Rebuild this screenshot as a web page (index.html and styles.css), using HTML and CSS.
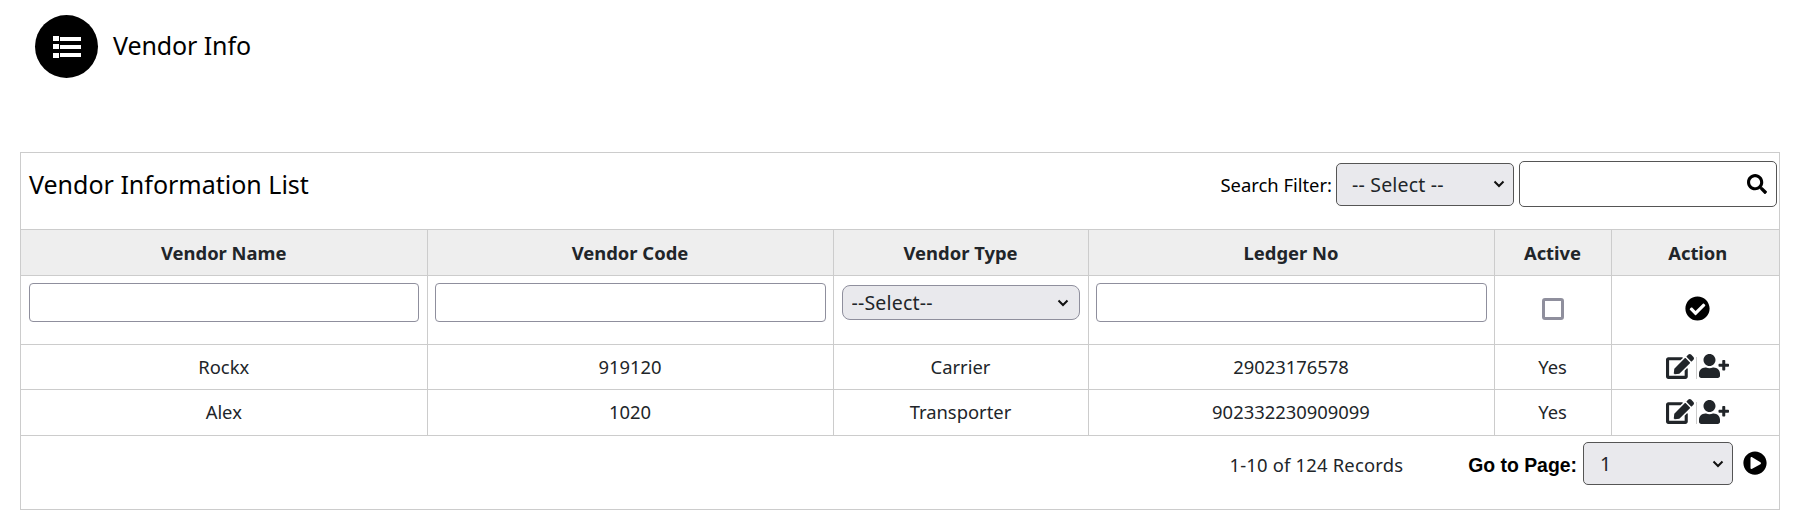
FILE: index.html
```html
<!DOCTYPE html>
<html lang="en">
<head>
<meta charset="utf-8">
<title>Vendor Info</title>
<link rel="stylesheet" href="styles.css">
</head>
<body>
<header class="page-head">
  <span class="head-badge">
    <svg class="icon-list" viewBox="0 0 28 22"><rect x="0" y="0" width="6" height="5"/><rect x="7" y="1" width="21" height="4"/><rect x="0" y="8" width="6" height="5"/><rect x="7" y="9" width="21" height="4"/><rect x="0" y="17" width="6" height="5"/><rect x="7" y="17" width="21" height="4"/></svg>
  </span>
  <h1 class="page-title">Vendor Info</h1>
</header>

<section class="card">
  <div class="card-head">
    <h2 class="card-title">Vendor Information List</h2>
    <div class="search">
      <label class="search-label">Search Filter:</label>
      <select class="search-select"><option>-- Select --</option></select>
      <div class="search-box">
        <input class="search-input" type="text">
        <svg class="icon-search" viewBox="0 0 512 512"><path d="M505 442.7L405.3 343c-4.5-4.5-10.6-7-17-7H372c27.6-35.3 44-79.7 44-128C416 93.1 322.9 0 208 0S0 93.1 0 208s93.1 208 208 208c48.3 0 92.7-16.4 128-44v16.3c0 6.4 2.5 12.5 7 17l99.7 99.7c9.4 9.4 24.6 9.4 33.9 0l28.3-28.3c9.4-9.4 9.4-24.6.1-34zM208 336c-70.7 0-128-57.2-128-128 0-70.7 57.2-128 128-128 70.7 0 128 57.2 128 128 0 70.7-57.2 128-128 128z"/></svg>
      </div>
    </div>
  </div>

  <table class="grid">
    <colgroup>
      <col class="c-name"><col class="c-code"><col class="c-type"><col class="c-ledger"><col class="c-active"><col class="c-action">
    </colgroup>
    <thead>
      <tr><th>Vendor Name</th><th>Vendor Code</th><th>Vendor Type</th><th>Ledger No</th><th>Active</th><th>Action</th></tr>
    </thead>
    <tbody>
      <tr class="filter-row">
        <td class="field-cell field-first"><input class="cell-input" type="text"></td>
        <td class="field-cell"><input class="cell-input" type="text"></td>
        <td class="field-cell field-select"><select class="cell-select"><option>--Select--</option></select></td>
        <td class="field-cell"><input class="cell-input" type="text"></td>
        <td><span class="checkbox"></span></td>
        <td>
          <svg class="icon-check" viewBox="0 0 512 512"><path d="M504 256c0 136.967-111.033 248-248 248S8 392.967 8 256 119.033 8 256 8s248 111.033 248 248zM227.314 387.314l184-184c6.248-6.248 6.248-16.379 0-22.627l-22.627-22.627c-6.248-6.249-16.379-6.249-22.628 0L216 308.118l-70.059-70.059c-6.248-6.248-16.379-6.248-22.628 0l-22.627 22.627c-6.248 6.248-6.248 16.379 0 22.627l104 104c6.249 6.249 16.379 6.249 22.628.001z"/></svg>
        </td>
      </tr>
      <tr class="data-row">
        <td>Rockx</td><td>919120</td><td>Carrier</td><td>29023176578</td><td>Yes</td>
        <td>
          <div class="actions">
            <svg class="icon-edit" viewBox="0 0 576 512"><path d="M402.6 83.2l90.2 90.2c3.8 3.8 3.8 10 0 13.8L274.4 405.6l-92.8 10.3c-12.4 1.4-22.9-9.1-21.5-21.5l10.3-92.8L388.8 83.2c3.8-3.8 10-3.8 13.8 0zm162-22.9l-48.8-48.8c-15.2-15.2-39.9-15.2-55.2 0l-35.4 35.4c-3.8 3.8-3.8 10 0 13.8l90.2 90.2c3.8 3.8 10 3.8 13.8 0l35.4-35.4c15.2-15.3 15.2-40 0-55.2zM384 346.2V448H64V128h229.8c3.2 0 6.2-1.3 8.5-3.5l40-40c7.6-7.6 2.2-20.5-8.5-20.5H48C21.5 64 0 85.5 0 112v352c0 26.5 21.5 48 48 48h352c26.5 0 48-21.5 48-48V306.2c0-10.7-12.9-16-20.5-8.5l-40 40c-2.2 2.3-3.5 5.3-3.5 8.5z"/></svg>
            <span class="sep"></span>
            <svg class="icon-user" viewBox="0 0 640 512"><path d="M624 208h-64v-64c0-8.8-7.2-16-16-16h-32c-8.8 0-16 7.2-16 16v64h-64c-8.8 0-16 7.2-16 16v32c0 8.8 7.2 16 16 16h64v64c0 8.8 7.2 16 16 16h32c8.8 0 16-7.2 16-16v-64h64c8.8 0 16-7.2 16-16v-32c0-8.8-7.2-16-16-16zm-400 48c70.7 0 128-57.3 128-128S294.7 0 224 0 96 57.3 96 128s57.3 128 128 128zm89.6 32h-16.7c-22.2 10.2-46.9 16-72.9 16s-50.6-5.8-72.9-16h-16.7C60.2 288 0 348.2 0 422.4V464c0 26.5 21.5 48 48 48h352c26.5 0 48-21.5 48-48v-41.6c0-74.2-60.2-134.4-134.4-134.4z"/></svg>
          </div>
        </td>
      </tr>
      <tr class="data-row">
        <td>Alex</td><td>1020</td><td>Transporter</td><td>902332230909099</td><td>Yes</td>
        <td>
          <div class="actions">
            <svg class="icon-edit" viewBox="0 0 576 512"><path d="M402.6 83.2l90.2 90.2c3.8 3.8 3.8 10 0 13.8L274.4 405.6l-92.8 10.3c-12.4 1.4-22.9-9.1-21.5-21.5l10.3-92.8L388.8 83.2c3.8-3.8 10-3.8 13.8 0zm162-22.9l-48.8-48.8c-15.2-15.2-39.9-15.2-55.2 0l-35.4 35.4c-3.8 3.8-3.8 10 0 13.8l90.2 90.2c3.8 3.8 10 3.8 13.8 0l35.4-35.4c15.2-15.3 15.2-40 0-55.2zM384 346.2V448H64V128h229.8c3.2 0 6.2-1.3 8.5-3.5l40-40c7.6-7.6 2.2-20.5-8.5-20.5H48C21.5 64 0 85.5 0 112v352c0 26.5 21.5 48 48 48h352c26.5 0 48-21.5 48-48V306.2c0-10.7-12.9-16-20.5-8.5l-40 40c-2.2 2.3-3.5 5.3-3.5 8.5z"/></svg>
            <span class="sep"></span>
            <svg class="icon-user" viewBox="0 0 640 512"><path d="M624 208h-64v-64c0-8.8-7.2-16-16-16h-32c-8.8 0-16 7.2-16 16v64h-64c-8.8 0-16 7.2-16 16v32c0 8.8 7.2 16 16 16h64v64c0 8.8 7.2 16 16 16h32c8.8 0 16-7.2 16-16v-64h64c8.8 0 16-7.2 16-16v-32c0-8.8-7.2-16-16-16zm-400 48c70.7 0 128-57.3 128-128S294.7 0 224 0 96 57.3 96 128s57.3 128 128 128zm89.6 32h-16.7c-22.2 10.2-46.9 16-72.9 16s-50.6-5.8-72.9-16h-16.7C60.2 288 0 348.2 0 422.4V464c0 26.5 21.5 48 48 48h352c26.5 0 48-21.5 48-48v-41.6c0-74.2-60.2-134.4-134.4-134.4z"/></svg>
          </div>
        </td>
      </tr>
    </tbody>
  </table>

  <div class="pager">
    <span class="records">1-10 of 124 Records</span>
    <label class="goto">Go to Page:</label>
    <select class="page-select"><option>1</option></select>
    <svg class="icon-play" viewBox="0 0 512 512"><path d="M256 8C119 8 8 119 8 256s111 248 248 248 248-111 248-248S393 8 256 8zm115.7 272l-176 101c-15.8 8.8-35.7-2.5-35.7-21V152c0-18.4 19.8-29.8 35.7-21l176 107c16.4 9.2 16.4 32.9 0 42z"/></svg>
  </div>
</section>
</body>
</html>
```

FILE: styles.css
```css
* { box-sizing: border-box; }

html, body { margin: 0; padding: 0; background: #fff; }

body {
  font-family: "Noto Sans", "Open Sans", sans-serif;
  font-size: 18.4px;
  color: #212529;
  height: 523px;
  overflow: hidden;
}

.page-head {
  display: flex;
  align-items: flex-start;
  gap: 15px;
  height: 152px;
  padding: 15px 0 0 35px;
}

.head-badge {
  width: 63px;
  height: 63px;
  border-radius: 50%;
  background: #000;
  display: flex;
  align-items: center;
  justify-content: center;
  flex: none;
}

.icon-list { width: 28px; height: 22px; fill: #fff; }

.page-title {
  margin: 13px 0 0;
  font-size: 25px;
  font-weight: 400;
  line-height: 34px;
  color: #000;
  letter-spacing: -0.1px;
}

.card {
  margin: 0 13px 0 20px;
  width: 1760px;
  height: 358px;
  border: 1px solid #ccc;
  display: flex;
  flex-direction: column;
}

.card-head {
  display: flex;
  align-items: center;
  justify-content: space-between;
  height: 76px;
  padding: 0 2px 14px 8px;
}

.card-title {
  margin: 0;
  font-size: 25px;
  font-weight: 400;
  color: #000;
}

.search { display: flex; align-items: center; }

.search-label { color: #000; font-size: 18.4px; margin-right: 4px; }

select {
  appearance: none;
  background-color: #e9e9ed;
  background-repeat: no-repeat;
  border: 1px solid #555;
  border-radius: 5px;
  font-family: inherit;
  font-size: 19.5px;
  letter-spacing: 0.2px;
  color: #212529;
}

.search-select,
.cell-select,
.page-select {
  background-image: url("data:image/svg+xml,%3Csvg xmlns='http://www.w3.org/2000/svg' viewBox='0 0 12 8'%3E%3Cpath d='M1.5 1.5 6 6l4.5-4.5' fill='none' stroke='%23111' stroke-width='2'/%3E%3C/svg%3E");
  background-size: 12px 8px;
  background-position: right 8px center;
}

.search-select {
  width: 178px;
  height: 43px;
  padding: 0 0 0 15px;
  margin-right: 5px;
}

.search-box { position: relative; width: 258px; height: 46px; }

.search-input {
  display: block;
  width: 100%;
  height: 100%;
  border: 1px solid #555;
  border-radius: 5px;
  background: #fff;
}

.icon-search {
  position: absolute;
  right: 10px;
  top: 13px;
  width: 20px;
  height: 20px;
  fill: #000;
}

.grid {
  width: 100%;
  table-layout: fixed;
  border-collapse: collapse;
}

.c-name { width: 406px; }
.c-code { width: 406px; }
.c-type { width: 255px; }
.c-ledger { width: 406px; }
.c-active { width: 117px; }
.c-action { width: 168px; }

.grid th, .grid td {
  border: 1px solid #ccc;
  text-align: center;
  padding: 0 8px;
  font-size: 18.4px;
}

.grid tr > :first-child { border-left: 0; }
.grid tr > :last-child { border-right: 0; padding-left: 13px; padding-right: 8px; }

.grid th {
  height: 46px;
  background: #eee;
  font-weight: 700;
}

.filter-row td { height: 69px; padding-bottom: 3px; }
.grid .filter-row .field-cell { vertical-align: top; padding: 7px 7px 0; }
.grid .filter-row .field-first,
.grid .filter-row .field-select { padding: 7px 8px 0; }
.data-row td { height: 45px; padding-bottom: 2px; }
.data-row:last-child td { height: 46px; }

.cell-input {
  display: block;
  width: 100%;
  height: 39px;
  border: 1px solid #8f8f9d;
  border-radius: 4px;
  background: #fff;
}

.cell-select {
  display: block;
  width: 100%;
  height: 35px;
  margin-top: 2px;
  padding: 0 0 0 9px;
  border-color: #8f8f9d;
  border-radius: 8px;
  background-position: right 10px center;
}

.checkbox {
  display: block;
  width: 22px;
  height: 22px;
  margin: 0 auto;
  border: 3px solid #8f8f9d;
  border-radius: 3px;
  background: #fff;
}

.icon-check { display: block; width: 25px; height: 25px; margin: 0 auto; fill: #000; }

.actions { display: flex; align-items: center; justify-content: center; gap: 2px; }

.icon-edit { width: 28px; height: 25px; fill: #212529; }
.icon-user { width: 30px; height: 24px; fill: #212529; }

.sep { width: 1px; height: 22px; background: #ccc; margin-top: 3px; }

.pager {
  display: flex;
  align-items: center;
  justify-content: flex-end;
  height: 62px;
  padding: 7px 12px 14px 0;
}

.records { color: #212529; margin-right: 65px; margin-top: 2px; letter-spacing: 0.2px; }

.goto {
  font-family: "Liberation Sans", Arial, sans-serif;
  font-size: 19.4px;
  font-weight: 700;
  color: #000;
  margin-right: 6px;
  margin-top: 3px;
}

.page-select {
  width: 150px;
  height: 43px;
  padding: 0 0 0 16px;
  margin-right: 10px;
}

.icon-play { width: 24px; height: 24px; margin-top: -2px; fill: #000; }
```
